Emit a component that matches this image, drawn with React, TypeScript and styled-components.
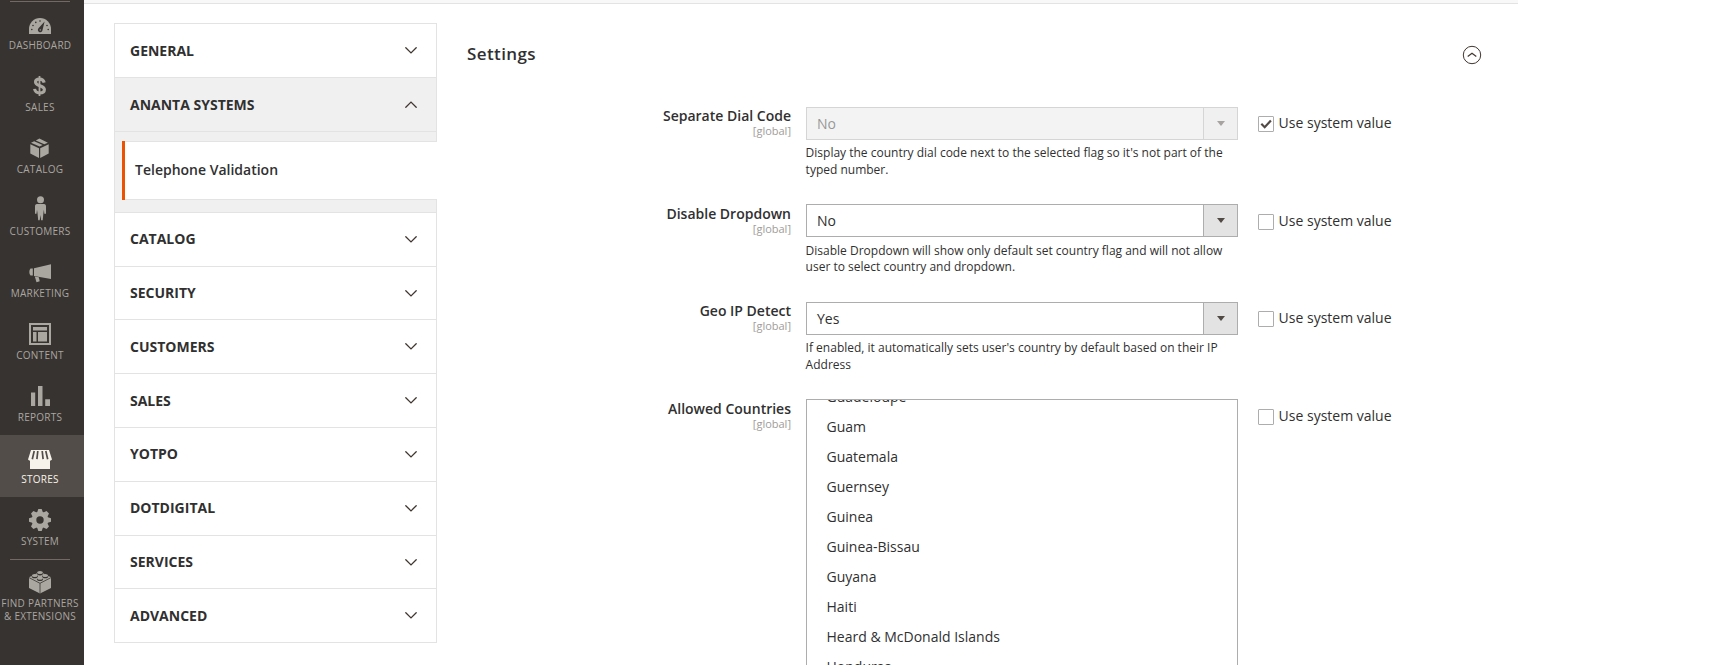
import React from 'react';
import styled, { createGlobalStyle } from 'styled-components';

const GlobalStyle = createGlobalStyle`
  *, *::before, *::after { box-sizing: border-box; }
  html, body { margin: 0; background: #fff; }
  body {
    overflow: hidden;
    color: #41362f;
    font-family: "Open Sans", "Noto Sans", sans-serif;
    font-size: 14px;
    line-height: 1.36;
  }
`;

const Page = styled.div`
  display: flex;
  height: 665px;
  overflow: hidden;
`;

const Sidebar = styled.nav`
  flex: none;
  width: 84px;
  padding-top: 1px;
  background: #373330;
`;

const MenuItem = styled.a<{ $active?: boolean; $divided?: boolean }>`
  position: relative;
  display: flex;
  flex-direction: column;
  align-items: center;
  height: 62px;
  padding: 10px 4px 0 0;
  background: ${p => (p.$active ? '#524d49' : 'transparent')};
  color: ${p => (p.$active ? '#f7f3eb' : '#aaa6a0')};
  font-size: 10px;
  line-height: 13px;
  letter-spacing: 0.25px;
  text-align: center;
  text-transform: uppercase;
  white-space: nowrap;

  &::before {
    content: '';
    display: ${p => (p.$divided ? 'block' : 'none')};
    position: absolute;
    top: 0;
    left: 10px;
    width: 60px;
    height: 1px;
    background: #736963;
  }
`;

const MenuIcon = styled.svg`
  flex: none;
  width: 28px;
  height: 28px;
  overflow: visible;
  fill: currentColor;
`;

const MenuLabel = styled.span`
  display: block;
`;

const Main = styled.main`
  width: 1434px;
`;

const HeaderEdge = styled.div`
  height: 4px;
  background: #f8f8f8;
  border-bottom: 1px solid #e3e3e3;
`;

const Columns = styled.div`
  display: flex;
  align-items: flex-start;
  padding: 19px 30px 0;
`;

const ConfigNav = styled.div`
  flex: none;
  width: 323px;
  margin-top: 0.4px;
  border-bottom: 1px solid #e3e3e3;
`;

const Section = styled.div<{ $open?: boolean }>`
  border: 1px solid #e3e3e3;
  border-bottom: 0;
  background: ${p => (p.$open ? '#f0f0f0' : '#fff')};
`;

const SectionTitle = styled.div`
  display: flex;
  align-items: center;
  justify-content: space-between;
  height: 52.8px;
  padding: 0 19px 0 15px;
  color: #303030;
  font-weight: 700;
  text-transform: uppercase;
`;

const SectionName = styled.span`
  margin-top: -1.1px;
`;

const SubItems = styled.div`
  height: 80.9px;
  margin-right: -1px;
  padding: 9px 0 0 7px;
  border-top: 1px solid #e3e3e3;
  border-right: 0;
`;

const CurrentItem = styled.a`
  position: relative;
  display: flex;
  align-items: center;
  height: 59px;
  padding: 0 0 2px 13px;
  border: 1px solid #e3e3e3;
  border-width: 1px 0;
  background: #fff;
  color: #303030;
  font-weight: 600;

  &::before {
    content: '';
    position: absolute;
    left: 0;
    top: -1px;
    bottom: -1px;
    width: 3px;
    background: #eb5202;
  }
`;

const Chevron = styled.svg<{ $up?: boolean }>`
  width: 12px;
  height: 7px;
  transform: ${p => (p.$up ? 'scaleY(-1)' : 'none')};
  fill: none;
  stroke: #41362f;
  stroke-width: 1.3;
  stroke-linecap: round;
`;

const Content = styled.section`
  flex: 1;
  margin-left: 29px;
`;

const ContentHeader = styled.header`
  display: flex;
  justify-content: space-between;
  align-items: center;
  height: 64px;
  padding: 0 6px 0 1px;
`;

const Heading = styled.h2`
  margin: 0;
  padding-bottom: 2px;
  color: #303030;
  font-size: 17px;
  font-weight: 600;
  letter-spacing: 0.4px;
`;

const CollapseIcon = styled.svg`
  width: 20px;
  height: 20px;
  fill: none;
  stroke: #41362f;
`;

const Fields = styled.div`
  padding-top: 20px;
`;

const Field = styled.div`
  display: flex;
  align-items: flex-start;
  height: 97.4px;
`;

const FieldLabel = styled.div`
  width: 325px;
  padding-top: 0.35px;
  color: #303030;
  font-weight: 600;
  line-height: 18px;
  text-align: right;
`;

const Scope = styled.span`
  display: block;
  margin-top: -0.93px;
  color: #a09c99;
  font-size: 11px;
  font-weight: 400;
  line-height: 13px;
`;

const FieldControl = styled.div`
  width: 432px;
  margin-left: 15px;
`;

const Dropdown = styled.div<{ $disabled?: boolean }>`
  display: flex;
  align-items: stretch;
  justify-content: space-between;
  height: 33px;
  border: 1px solid #adadad;
  background: ${p => (p.$disabled ? '#e9e9e9' : '#fff')};
  color: #303030;
  opacity: ${p => (p.$disabled ? 0.5 : 1)};
`;

const DropdownValue = styled.span`
  padding-left: 10px;
  line-height: 32px;
`;

const DropdownButton = styled.span`
  display: flex;
  align-items: center;
  justify-content: center;
  width: 34px;
  border-left: 1px solid #adadad;
  background: #e3e3e3;

  &::after {
    content: '';
    margin-left: 1px;
    border: 4px solid transparent;
    border-top: 5px solid #514943;
    border-bottom: 0;
  }
`;

const Note = styled.p`
  margin: 5.12px 0 0 -0.4px;
  color: #303030;
  font-size: 12px;
  line-height: 16.7px;
`;

const CountryList = styled.div`
  height: 290px;
  overflow: hidden;
  border: 1px solid #adadad;
`;

const CountryOptions = styled.div`
  margin-top: -18px;
  padding-left: 19.5px;
  color: #303030;
`;

const Country = styled.div`
  height: 30px;
  line-height: 30px;
`;

const Inherit = styled.label`
  display: flex;
  align-items: flex-start;
  margin-left: 20px;
  padding-top: 6.35px;
  color: #303030;
  line-height: 19px;
`;

const CheckBox = styled.span`
  display: flex;
  width: 16px;
  height: 16px;
  margin: 3px 4.6px 0 0;
  border: 1px solid #adadad;
  border-radius: 1px;
  background: #fff;
`;

const Tick = styled.svg`
  width: 14px;
  height: 14px;
  fill: none;
  stroke: #514943;
  stroke-width: 2.2;
`;

const DARK = '#373330';

const gearTeeth = [0, 45, 90, 135, 180, 225, 270, 315];

const studs = [
  [14, 3.6],
  [8.8, 6.4],
  [19.2, 6.4],
  [14, 9.2],
];

const icons: Record<string, React.ReactNode> = {
  dashboard: (
    <>
      <path d="M3 23v-5a11 11 0 0 1 22 0v5z" />
      <g fill={DARK}>
        <path d="M18.6 10.6 16.4 19.4a2.3 2.3 0 1 1-3.9-2.1z" />
        <circle cx="5.8" cy="18.5" r=".8" />
        <circle cx="7" cy="14.5" r=".8" />
        <circle cx="9.8" cy="11.4" r=".8" />
        <circle cx="14" cy="10" r=".8" />
        <circle cx="21" cy="14.5" r=".8" />
        <circle cx="22.2" cy="18.5" r=".8" />
      </g>
      <circle cx="14.3" cy="18.9" r=".7" />
    </>
  ),
  sales: (
    <g fill="none" stroke="currentColor">
      <path d="M18.2 9.600C17.600 7 16 6.100 13.500 6.100c-2.500 0-4 1.100-4 3 0 4.600 8.900 2.800 8.900 7.500 0 2.200-1.900 3.400-4.700 3.400-2.900 0-4.700-1.300-5.100-4.100" strokeWidth="3.100" />
      <path d="M13.500 3v20" strokeWidth="1.800" />
    </g>
  ),
  catalog: (
    <>
      <path d="M4.300 9.300 13 13.300v9.700l-8.700-4.500z" />
      <path d="M22.700 9.300 14.200 13.300v9.700l8.500-4.500z" />
      <path d="m5 7.700 3.200-1.500 8.500 3.900-3.100 1.500zM9.800 5.400l3.600-1.900 8.500 4.300-3.600 1.500z" />
    </>
  ),
  customers: (
    <>
      <circle cx="14.5" cy="2.700" r="3.500" />
      <path d="M11 7h7c1.500 0 2 1 2 2.500v7.200h-1.700l-.4-4-.5 3.300-.7 7.300h-1.600L14.500 18l-.8 5.300h-1.500L11.500 16l-.5-3.300-.5 4H9V9.500C9 8 9.500 7 11 7z" />
    </>
  ),
  marketing: (
    <>
      <path d="M8 9.300 25 5.300v14.700L8 17z" />
      <path d="M6.800 9.500v7H4.500C2.900 15 2.900 11 4.500 9.500z" />
      <path d="m8.800 17.500 4 .8.900 4-3.200.9z" />
    </>
  ),
  content: (
    <>
      <path fillRule="evenodd" d="M3 2h22v22H3zM5 4v18h18V4z" />
      <path d="M7 6h14v3.500H7zM7 11h3.500v9.500H7zM12 11h9v9.500h-9z" />
    </>
  ),
  reports: <path d="M5 9.500h4.200V23H5zM12 3h4.500v20H12zM19.200 16.200H24V23h-4.800z" />,
  stores: (
    <>
      <path d="M4 14h20v10H4z" />
      <path d="M5 5h18l3 9.500c-.8 1.500-3 1.500-4 0-1 1.500-3 1.500-4 0-1 1.500-3 1.500-4 0-1 1.500-3 1.500-4 0-1 1.500-3 1.500-4 0-1 1.500-3.200 1.500-4 0z" />
      <g stroke="#524d49" strokeWidth="1.700">
        <path d="M8.200 6 6.300 14.200M11.800 6l-.9 8.200M16.200 6l.9 8.200M19.800 6l1.900 8.200" />
      </g>
    </>
  ),
  system: (
    <>
      {gearTeeth.map(a => (
        <path key={a} d="M10.900 6 12.300 2h3.400l1.400 4z" transform={`rotate(${a} 14 13)`} />
      ))}
      <path fillRule="evenodd" d="M14 4.700a8.300 8.300 0 1 0 0 16.600 8.300 8.300 0 0 0 0-16.600zM14 9.300a3.700 3.700 0 1 1 0 7.400 3.700 3.700 0 0 1 0-7.400z" />
    </>
  ),
  partners: (
    <>
      <path d="M14 2.800 25 8.300v10.600L14 24.500 3 18.900V8.300z" />
      <path d="m3 8.600 11 5.700 11-5.700M14 14.300v10.200" fill="none" stroke={DARK} strokeWidth=".8" />
      {studs.map(([x, y]) => (
        <g key={`${x}-${y}`}>
          <ellipse cx={x} cy={y + 1} rx="3.100" ry="1.800" fill={DARK} />
          <ellipse cx={x} cy={y} rx="2.900" ry="1.500" />
        </g>
      ))}
    </>
  ),
};

const menu = [
  { icon: 'dashboard', label: 'Dashboard', divided: true },
  { icon: 'sales', label: 'Sales' },
  { icon: 'catalog', label: 'Catalog' },
  { icon: 'customers', label: 'Customers' },
  { icon: 'marketing', label: 'Marketing' },
  { icon: 'content', label: 'Content' },
  { icon: 'reports', label: 'Reports' },
  { icon: 'stores', label: 'Stores', active: true },
  { icon: 'system', label: 'System' },
  { icon: 'partners', label: <>Find Partners<br />&amp; Extensions</>, divided: true },
];

const sections = ['General', 'Ananta Systems', 'Catalog', 'Security', 'Customers', 'Sales', 'Yotpo', 'Dotdigital', 'Services', 'Advanced'];

const countries = ['Guadeloupe', 'Guam', 'Guatemala', 'Guernsey', 'Guinea', 'Guinea-Bissau', 'Guyana', 'Haiti', 'Heard & McDonald Islands', 'Honduras'];

const fields = [
  { label: 'Separate Dial Code', value: 'No', inherited: true, note: "Display the country dial code next to the selected flag so it's not part of the typed number." },
  { label: 'Disable Dropdown', value: 'No', note: 'Disable Dropdown will show only default set country flag and will not allow user to select country and dropdown.' },
  { label: 'Geo IP Detect', value: 'Yes', note: "If enabled, it automatically sets user's country by default based on their IP Address" },
];

function FieldRow({ label, inherited, children }: { label: string; inherited?: boolean; children: React.ReactNode }) {
  return (
    <Field>
      <FieldLabel>
        {label}
        <Scope>[global]</Scope>
      </FieldLabel>
      <FieldControl>{children}</FieldControl>
      <Inherit>
        <CheckBox>
          {inherited && <Tick viewBox="0 0 14 14"><path d="m2.300 6.800 3.400 3.400 6.200-6.600" /></Tick>}
        </CheckBox>
        Use system value
      </Inherit>
    </Field>
  );
}

export default function App() {
  return (
    <>
      <GlobalStyle />
      <Page>
        <Sidebar>
          {menu.map(item => (
            <MenuItem key={item.icon} $active={item.active} $divided={item.divided}>
              <MenuIcon viewBox="0 0 28 28">{icons[item.icon]}</MenuIcon>
              <MenuLabel>{item.label}</MenuLabel>
            </MenuItem>
          ))}
        </Sidebar>
        <Main>
          <HeaderEdge />
          <Columns>
            <ConfigNav>
              {sections.map(name => {
                const open = name === 'Ananta Systems';
                return (
                  <Section key={name} $open={open}>
                    <SectionTitle>
                      <SectionName>{name}</SectionName>
                      <Chevron viewBox="0 0 12 7" $up={open}><path d="M.8.800 6 5.900 11.200.8" /></Chevron>
                    </SectionTitle>
                    {open && (
                      <SubItems>
                        <CurrentItem>Telephone Validation</CurrentItem>
                      </SubItems>
                    )}
                  </Section>
                );
              })}
            </ConfigNav>
            <Content>
              <ContentHeader>
                <Heading>Settings</Heading>
                <CollapseIcon viewBox="0 0 20 20">
                  <circle cx="10" cy="10" r="8.700" />
                  <path d="m5.700 11.500 4.300-3.300 4.300 3.300" strokeWidth="1.200" />
                </CollapseIcon>
              </ContentHeader>
              <Fields>
                {fields.map(f => (
                  <FieldRow key={f.label} label={f.label} inherited={f.inherited}>
                    <Dropdown $disabled={f.inherited}>
                      <DropdownValue>{f.value}</DropdownValue>
                      <DropdownButton />
                    </Dropdown>
                    <Note>{f.note}</Note>
                  </FieldRow>
                ))}
                <FieldRow label="Allowed Countries">
                  <CountryList>
                    <CountryOptions>
                      {countries.map(c => <Country key={c}>{c}</Country>)}
                    </CountryOptions>
                  </CountryList>
                </FieldRow>
              </Fields>
            </Content>
          </Columns>
        </Main>
      </Page>
    </>
  );
}
